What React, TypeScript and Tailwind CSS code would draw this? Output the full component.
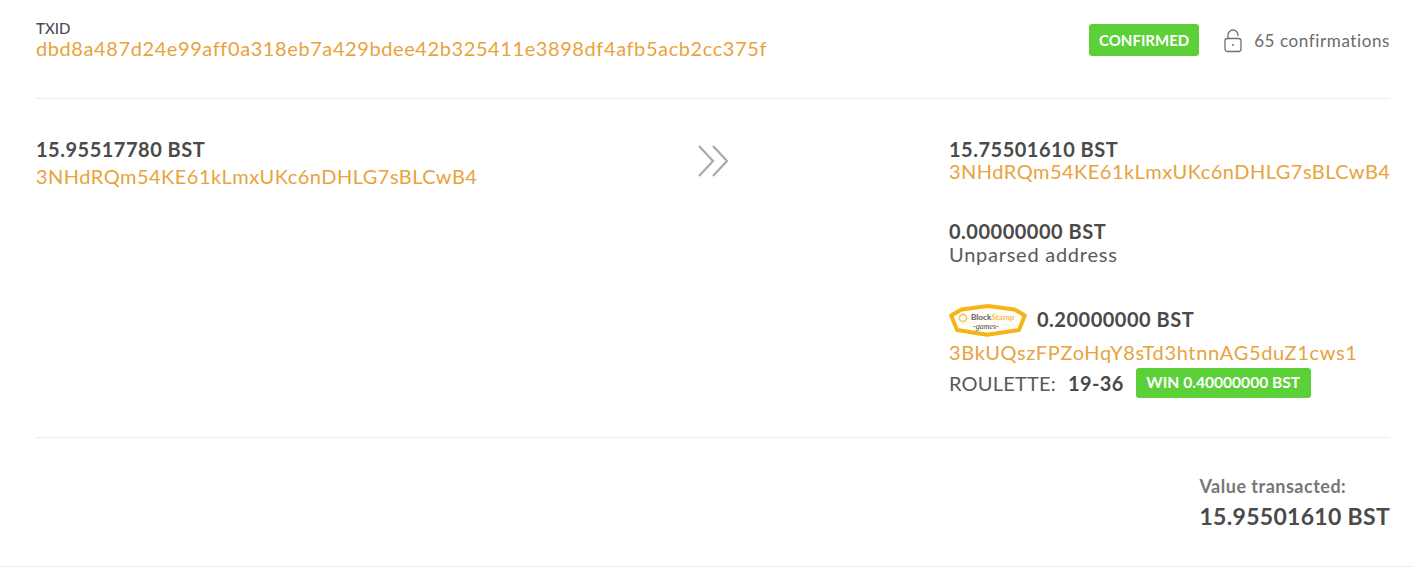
import React from "react";

const font = "font-['Lato','Liberation_Sans',sans-serif]";

function Logo() {
  return (
    <svg width="78" height="33" viewBox="0 0 78 33" className="shrink-0 mt-[2px]">
      <path d="M39 2 L12.5 5.5 L2.2 11.5 L8 26 L38 30.8 L70 26 L75.8 11.5 L65.5 5.5 Z" fill="#fffdf4" stroke="#f5b417" strokeWidth="4" strokeLinejoin="round" />
      <circle cx="14" cy="14" r="3.6" fill="none" stroke="#f3c766" strokeWidth="1.6" />
      <text x="22" y="16" fontSize="8.2" fontWeight="700" fontFamily="Lato, sans-serif" fill="#5b5b5b">Block<tspan fill="#f0c15a">Stamp</tspan></text>
      <text x="24" y="24.5" fontSize="8" fontStyle="italic" fontFamily="'Liberation Serif', serif" fill="#444">-games-</text>
    </svg>
  );
}

function Lock() {
  return (
    <svg width="18" height="24" viewBox="0 0 18 24" fill="none" stroke="#6f6f6f" strokeWidth="1.3" className="shrink-0">
      <rect x="1" y="9.5" width="16" height="13" rx="2.5" />
      <path d="M4 9.5 V6 a5 5 0 0 1 10 0 V7" />
      <circle cx="9" cy="16" r="1" fill="#6f6f6f" stroke="none" />
    </svg>
  );
}

function Chevrons() {
  return (
    <svg width="32" height="34" viewBox="0 0 32 34" fill="none" stroke="#a9a9a9" strokeWidth="2.2" className="shrink-0">
      <path d="M2 2 L16 17 L2 32" />
      <path d="M16 2 L30 17 L16 32" />
    </svg>
  );
}

export default function App() {
  return (
    <div className={`${font} w-[1413px] h-[583px] bg-white text-[#4a4a4a] overflow-hidden`}>
      <div className="ml-[36px] mr-[23px] h-[99px] border-b border-[#ececec] flex justify-between items-start">
        <div className="pt-[19px]">
          <div className="text-[15px] leading-[18px] font-medium text-[#4b4b55]">TXID</div>
          <div className="text-[20px] leading-[22px] text-[#e8a33d] tracking-[0.59px]">dbd8a487d24e99aff0a318eb7a429bdee42b325411e3898df4afb5acb2cc375f</div>
        </div>
        <div className="flex items-center pt-[24px]">
          <span className="h-[32px] w-[110px] flex items-center justify-center rounded-[3px] bg-[#5cd038] text-white text-[15px] font-bold">CONFIRMED</span>
          <span className="ml-[25px] mt-[1px]"><Lock /></span>
          <span className="ml-[12px] pt-[2px] text-[17px] text-[#6b6b6b] tracking-[0.6px]">65 confirmations</span>
        </div>
      </div>

      <div className="ml-[36px] mr-[23px] h-[339px] border-b border-[#ececec] flex justify-between items-start">
        <div className="pt-[38px] w-[660px]">
          <div className="text-[20px] leading-[25px] font-bold tracking-[0.5px]">15.95517780 BST</div>
          <div className="text-[20px] leading-[28px] text-[#e8a33d] tracking-[0.48px]">3NHdRQm54KE61kLmxUKc6nDHLG7sBLCwB4</div>
        </div>
        <div className="pt-[45px] mr-[220px]"><Chevrons /></div>
        <div className="pt-[38px] w-[441px]">
          <div className="text-[20px] leading-[25px] font-bold tracking-[0.5px]">15.75501610 BST</div>
          <div className="text-[20px] leading-[19px] text-[#e8a33d] tracking-[0.48px]">3NHdRQm54KE61kLmxUKc6nDHLG7sBLCwB4</div>
          <div className="mt-[38px] text-[20px] leading-[25px] font-bold tracking-[0.5px]">0.00000000 BST</div>
          <div className="text-[20px] leading-[20px] text-[#5a5a5a] tracking-[0.75px]">Unparsed address</div>
          <div className="mt-[39px] flex items-center gap-[10px] h-[32px]">
            <Logo />
            <span className="text-[20px] font-bold tracking-[0.5px]">0.20000000 BST</span>
          </div>
          <div className="mt-[5px] text-[20px] leading-[25px] text-[#e8a33d] tracking-[0.65px]">3BkUQszFPZoHqY8sTd3htnnAG5duZ1cws1</div>
          <div className="mt-[3px] flex items-center h-[30px]">
            <span className="text-[20px] text-[#5a5a5a] tracking-[0.2px]">ROULETTE:</span>
            <span className="ml-[12px] text-[20px] font-bold tracking-[0.4px]">19-36</span>
            <span className="ml-[12px] h-[30px] w-[175px] flex items-center justify-center rounded-[3px] bg-[#5cd038] text-white text-[15.6px] font-bold">WIN 0.40000000 BST</span>
          </div>
        </div>
      </div>

      <div className="ml-[36px] mr-[23px] h-[128px] flex justify-end">
        <div className="pt-[37px]">
          <div className="text-[18px] leading-[22px] font-bold text-[#777] tracking-[0.5px]">Value transacted:</div>
          <div className="mt-[5px] text-[23px] leading-[28px] font-bold tracking-[0.3px]">15.95501610 BST</div>
        </div>
      </div>
      <div className="border-t border-[#ececec]" />
    </div>
  );
}
